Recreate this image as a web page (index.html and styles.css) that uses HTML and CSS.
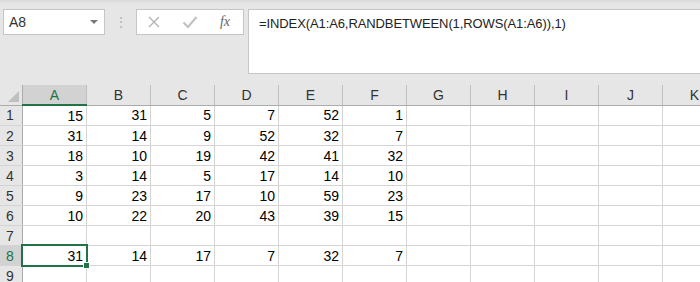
FILE: index.html
```html
<!DOCTYPE html>
<html>
<head>
    <link rel="stylesheet" href="styles.css">
</head>
<body>
    <div class="bar">
        <div class="name-box">
            <span>A8</span>
            <span class="caret"></span>
        </div>
        <div class="grip">&#8942;</div>
        <div class="fx-buttons">
            <svg class="fx-icon" width="14" height="14" viewBox="0 0 14 14"><path d="M2 2 L12 12 M12 2 L2 12" stroke="#b4b4b4" stroke-width="1.4" fill="none"/></svg>
            <svg class="fx-icon" width="16" height="14" viewBox="0 0 16 14"><path d="M1.5 7.5 L6 12 L14.5 2" stroke="#c2c2c2" stroke-width="2.2" fill="none"/></svg>
            <span class="fx">fx</span>
        </div>
        <div class="formula">=INDEX(A1:A6,RANDBETWEEN(1,ROWS(A1:A6)),1)</div>
    </div>

    <table class="sheet">
        <tr class="heads">
            <th class="corner"><span class="tri"></span></th>
            <th class="sel-col">A</th><th>B</th><th>C</th><th>D</th><th>E</th><th>F</th>
            <th>G</th><th>H</th><th>I</th><th>J</th><th>K</th>
        </tr>
        <tr><th>1</th><td>15</td><td>31</td><td>5</td><td>7</td><td>52</td><td>1</td><td></td><td></td><td></td><td></td><td></td></tr>
        <tr><th>2</th><td>31</td><td>14</td><td>9</td><td>52</td><td>32</td><td>7</td><td></td><td></td><td></td><td></td><td></td></tr>
        <tr><th>3</th><td>18</td><td>10</td><td>19</td><td>42</td><td>41</td><td>32</td><td></td><td></td><td></td><td></td><td></td></tr>
        <tr><th>4</th><td>3</td><td>14</td><td>5</td><td>17</td><td>14</td><td>10</td><td></td><td></td><td></td><td></td><td></td></tr>
        <tr><th>5</th><td>9</td><td>23</td><td>17</td><td>10</td><td>59</td><td>23</td><td></td><td></td><td></td><td></td><td></td></tr>
        <tr><th>6</th><td>10</td><td>22</td><td>20</td><td>43</td><td>39</td><td>15</td><td></td><td></td><td></td><td></td><td></td></tr>
        <tr><th>7</th><td></td><td></td><td></td><td></td><td></td><td></td><td></td><td></td><td></td><td></td><td></td></tr>
        <tr><th class="sel-row">8</th><td class="active">31</td><td>14</td><td>17</td><td>7</td><td>32</td><td>7</td><td></td><td></td><td></td><td></td><td></td></tr>
        <tr><th>9</th><td></td><td></td><td></td><td></td><td></td><td></td><td></td><td></td><td></td><td></td><td></td></tr>
    </table>
</body>
</html>
```

FILE: styles.css
```css
body {
    margin: 0;
    width: 700px;
    height: 282px;
    overflow: hidden;
    background: #e6e6e6;
    font-family: "Liberation Sans", Arial, sans-serif;
}

.bar {
    display: flex;
    align-items: flex-start;
    height: 76px;
    padding: 9px 0 0 3px;
    box-sizing: border-box;
    background: linear-gradient(#d9d9d9, #e6e6e6 4px);
}

.name-box {
    width: 89px;
    height: 24px;
    background: #fff;
    border: 1px solid #c6c6c6;
    display: flex;
    align-items: center;
    justify-content: space-between;
    padding: 0 6px 0 5px;
    font-size: 14px;
    color: #333;
}

.caret {
    width: 0;
    height: 0;
    border-left: 4px solid transparent;
    border-right: 4px solid transparent;
    border-top: 4px solid #7a7a7a;
}

.grip {
    width: 31px;
    text-align: center;
    color: #b8b8b8;
    font-size: 14px;
    line-height: 26px;
}

.fx-buttons {
    width: 108px;
    height: 26px;
    background: #fff;
    border: 1px solid #c6c6c6;
    display: flex;
    align-items: center;
    justify-content: space-between;
    padding: 0 13px 0 10px;
    box-sizing: border-box;
}

.fx {
    font-family: "Liberation Serif", serif;
    font-style: italic;
    font-size: 14px;
    color: #666;
}

.formula {
    flex: 1;
    height: 65px;
    margin-left: 4px;
    background: #fff;
    border: 1px solid #c6c6c6;
    border-right: none;
    padding: 6px 0 0 10px;
    box-sizing: border-box;
    font-size: 13px;
    color: #222;
    letter-spacing: -0.1px;
}

.sheet {
    border-collapse: collapse;
    table-layout: fixed;
    width: 727px;
    margin-top: 9px;
    font-size: 14px;
    background: #fff;
}

.sheet td,
.sheet th {
    height: 19px;
    padding: 0;
    border: 1px solid #d4d4d4;
    border-top: none;
    border-left: none;
    white-space: nowrap;
}

.sheet td {
    text-align: right;
    padding-right: 3px;
    color: #000;
}

.sheet th {
    background: #e6e6e6;
    font-weight: normal;
    color: #333;
}

.heads th {
    width: 63px;
    border-right: 1px solid #c0c0c0;
    border-bottom: 1px solid #ababab;
}

.sheet tr th:first-child {
    text-align: left;
    padding-left: 6px;
    border-right: 1px solid #ababab;
}

.heads .corner {
    width: 16px;
}

.corner {
    position: relative;
}

.tri {
    position: absolute;
    right: 3px;
    bottom: 3px;
    width: 0;
    height: 0;
    border-left: 11px solid transparent;
    border-bottom: 11px solid #bfbfbf;
}

.heads .sel-col {
    background: #d2d2d2;
    color: #217346;
    border-bottom: 2px solid #217346;
}

.sheet .sel-row {
    background: #d2d2d2;
    color: #217346;
}

.active {
    position: relative;
}

.active::before {
    content: "";
    position: absolute;
    left: -2px;
    top: -2px;
    right: -2px;
    bottom: -2px;
    border: 2px solid #217346;
}

.active::after {
    content: "";
    position: absolute;
    right: -4px;
    bottom: -4px;
    width: 5px;
    height: 5px;
    background: #217346;
    border: 1px solid #fff;
}
```
